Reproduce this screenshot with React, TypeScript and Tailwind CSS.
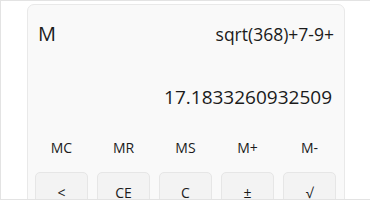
export default function App() {
  const mem = ["MC", "MR", "MS", "M+", "M-"];
  const btns = ["<", "CE", "C", "±", "√"];
  return (
    <div
      className="w-[370px] h-[200px] overflow-hidden bg-white border-t border-l border-b border-[#e3e3e3] pl-[26px] pt-[3px] text-[#1b1b1b]"
      style={{ fontFamily: '"Open Sans", "Noto Sans", sans-serif' }}
    >
      <div className="w-[318px] h-[220px] rounded-t-[7px] border border-[#e9e9e9] bg-[#f9f9f9] pt-[15px] flex flex-col">
        <div className="h-[28px] flex items-center justify-between pl-[10px] pr-[10px]">
          <span className="text-[20px] leading-[28px]">M</span>
          <span className="text-[17.5px] leading-[28px]">sqrt(368)+7-9+</span>
        </div>
        <div className="mt-[35px] h-[28px] flex justify-end pr-[12px]">
          <span className="text-[19px] leading-[28px]">17.1833260932509</span>
        </div>
        <div className="mt-[27px] h-[20px] flex gap-[9px] pl-[7px]">
          {mem.map((m) => (
            <div key={m} className="w-[53px] text-center text-[14px] leading-[20px]">
              {m}
            </div>
          ))}
        </div>
        <div className="mt-[14px] flex gap-[9px] pl-[7px]">
          {btns.map((b) => (
            <div
              key={b}
              className="w-[53px] h-[40px] rounded-[5px] border border-[#e6e6e6] bg-[#f3f3f3] flex items-center justify-center text-[14px]"
            >
              {b}
            </div>
          ))}
        </div>
      </div>
    </div>
  );
}
